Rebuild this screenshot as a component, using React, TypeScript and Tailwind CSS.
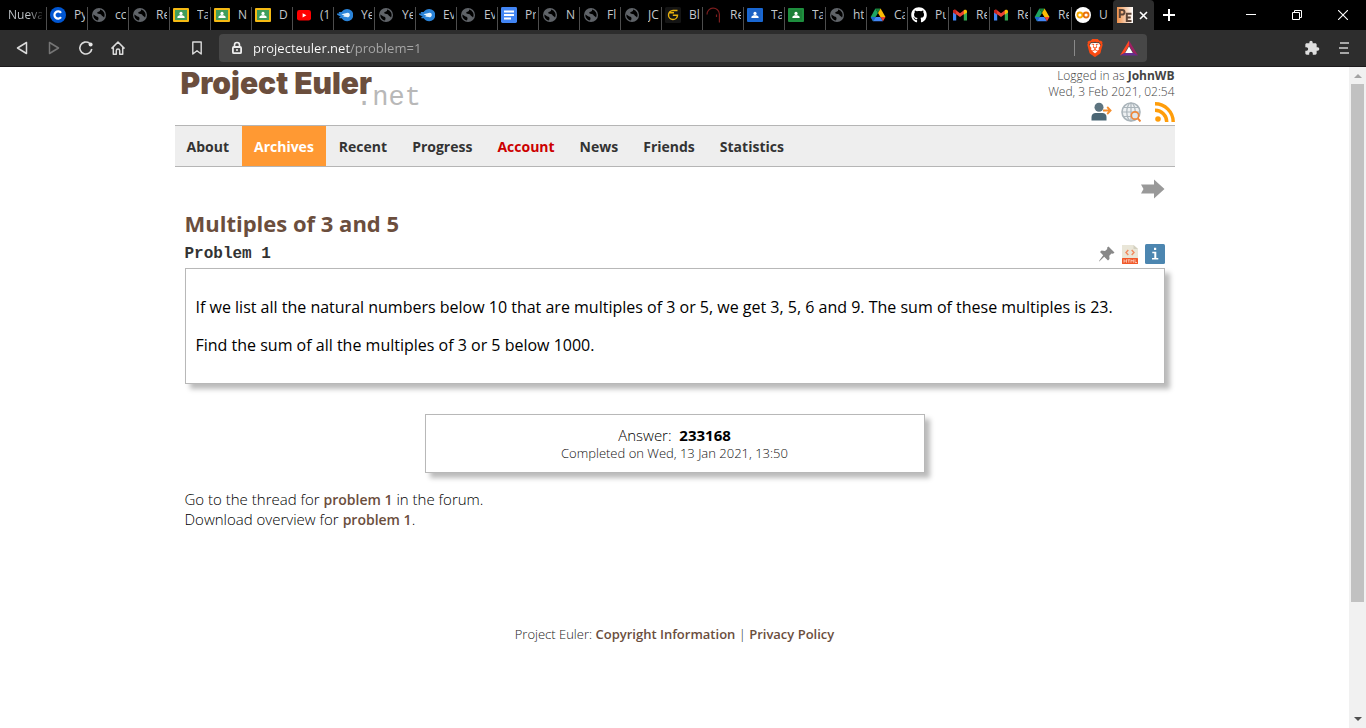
import type { ReactNode } from "react";
import { FaGithub } from "react-icons/fa";
import { MdExtension } from "react-icons/md";
import { SiBrave } from "react-icons/si";

const iconBox = "h-4 w-4 shrink-0";

function Coursera() {
  return (
    <svg viewBox="0 0 16 16" className={iconBox} aria-hidden="true">
      <circle cx="8" cy="8" r="8" fill="#0056d2" />
      <path d="M11 5.9A3.6 3.6 0 1 0 11 10.1" fill="none" stroke="#fff" strokeWidth="2.2" />
    </svg>
  );
}

function Globe() {
  return (
    <svg viewBox="0 0 16 16" className={iconBox} aria-hidden="true">
      <circle cx="8" cy="8" r="7" fill="#5f6368" />
      <path d="M2.300 7.600 5.500 9.500c1.500.3 2.200 1 2 2.200L7 13.600A5.700 5.700 0 0 1 2.300 7.600z" fill="#000" />
      <path d="M9 2.500v1.200c-.3 1-2.600.8-2.800 2C6.200 7 8.300 6.800 9.600 7.300c1.200.5.900 1.900 2.500 2.100l.9 1.200A5.700 5.700 0 0 0 9 2.500z" fill="#000" />
    </svg>
  );
}

function Board({ frame, fill }: { frame: string; fill: string }) {
  return (
    <svg viewBox="0 0 16 16" className={iconBox} aria-hidden="true">
      <rect x="0" y="1" width="16" height="14" rx="1" fill={frame} />
      <rect x="2" y="3" width="12" height="10" fill={fill} />
      <circle cx="8" cy="6.4" r="1.6" fill="#fff" />
      <path d="M4.4 11V10c0-1.2 2-1.8 3.6-1.8s3.6.6 3.6 1.8v1z" fill="#fff" />
    </svg>
  );
}

function Youtube() {
  return (
    <svg viewBox="0 0 16 16" className={iconBox} aria-hidden="true">
      <rect x="1" y="3" width="14" height="10.6" rx="2.4" fill="#f00" />
      <path d="M6.6 6.2 10.4 8.3 6.6 10.4z" fill="#fff" />
    </svg>
  );
}

function Comet() {
  return (
    <svg viewBox="0 0 16 16" className={iconBox} aria-hidden="true">
      <path d="M0 6.600h2.400L1.600 5h3C6 3 8 2 10.200 2a6 6 0 0 1 0 12.200C7.800 14.200 6 13 4.800 11.200H2.400V10H4L0 7.600z" fill="#2a83d8" />
      <path d="M4.500 7.200 9.600 5.900a2.300 2.300 0 1 1 0 4.200L6 9.400 7.400 8.800z" fill="#e4f2fc" />
    </svg>
  );
}

function Docs() {
  return (
    <svg viewBox="0 0 16 16" className={iconBox} aria-hidden="true">
      <rect width="16" height="16" rx="1.4" fill="#4285f4" />
      <path d="M3 4.500h10M3 8h10M3 11.500h7" stroke="#fff" strokeWidth="1.800" />
    </svg>
  );
}

function GoldG() {
  return (
    <svg viewBox="0 0 16 16" className={iconBox} aria-hidden="true">
      <rect width="16" height="16" rx="1.5" fill="#141414" />
      <path d="M12.500 3.500H8a4.500 4.500 0 1 0 4.500 4.700H7.800M4 5.700h5" fill="none" stroke="#e8b10c" strokeWidth="1.400" />
    </svg>
  );
}

function Arch() {
  return (
    <svg viewBox="0 0 16 16" className={iconBox} aria-hidden="true">
      <path d="M1 7.500a6.200 6.200 0 0 1 12.400-.5v8.500M10.500 10V7.500" fill="none" stroke="#7a1d1d" strokeWidth="1.200" />
    </svg>
  );
}

function Drive() {
  return (
    <svg viewBox="0 0 16 16" className={iconBox} aria-hidden="true">
      <path d="M5.400 1.500 8 6 3 14.300.700 10z" fill="#1ea362" />
      <path d="M5.400 1.500h5.200L8 6z" fill="#188038" />
      <path d="M10.600 1.500 15.500 10h-5.100L8 6z" fill="#fbbc04" />
      <path d="M.700 10h5L3 14.300z" fill="#1967d2" />
      <path d="M5.700 10h4.700L13 14.300H3z" fill="#4285f4" />
      <path d="M10.400 10h5.100L13 14.300z" fill="#ea4335" />
    </svg>
  );
}

function Github() {
  return <FaGithub className="h-4 w-4 shrink-0 text-white" aria-hidden="true" />;
}

function Gmail() {
  return (
    <svg viewBox="0 0 16 16" className={iconBox} aria-hidden="true">
      <path d="M1 4.500v9h3.200V6.800z" fill="#4285f4" />
      <path d="M15 4.500v9h-3.200V6.800z" fill="#34a853" />
      <path d="M1 4.600C1 2.800 2.800 2.200 4 3.200l4 3.100 4-3.100V7L8 10.100 1 5z" fill="#ea4335" />
      <path d="M1 4.300v1.200L4.200 7.800V3.300C2.600 2.300 1 3 1 4.300z" fill="#c5221f" />
      <path d="M15 4.300v1.200l-3.200 2.300V3.300C13.400 2.300 15 3 15 4.300z" fill="#fbbc04" />
    </svg>
  );
}

function Colab() {
  return (
    <svg viewBox="0 0 16 16" className={iconBox} aria-hidden="true">
      <circle cx="8" cy="8" r="8" fill="#fff" />
      <circle cx="4.900" cy="8" r="2.500" fill="none" stroke="#f9ab00" strokeWidth="1.800" />
      <circle cx="11.100" cy="8" r="2.500" fill="none" stroke="#e8710a" strokeWidth="1.800" />
    </svg>
  );
}

const tabs: { icon: ReactNode; title: string }[] = [
  { icon: <Coursera />, title: "Py" },
  { icon: <Globe />, title: "cc" },
  { icon: <Globe />, title: "Re" },
  { icon: <Board frame="#f5ba14" fill="#3f9d5c" />, title: "Ta" },
  { icon: <Board frame="#f5ba14" fill="#3f9d5c" />, title: "N" },
  { icon: <Board frame="#f5ba14" fill="#3f9d5c" />, title: "D" },
  { icon: <Youtube />, title: "(1" },
  { icon: <Comet />, title: "Ye" },
  { icon: <Globe />, title: "Ye" },
  { icon: <Comet />, title: "Ev" },
  { icon: <Globe />, title: "Ev" },
  { icon: <Docs />, title: "Pr" },
  { icon: <Globe />, title: "N" },
  { icon: <Globe />, title: "Fl" },
  { icon: <Globe />, title: "JC" },
  { icon: <GoldG />, title: "Bl" },
  { icon: <Arch />, title: "Re" },
  { icon: <Board frame="#1967d2" fill="#1d62c4" />, title: "Ta" },
  { icon: <Board frame="#1e8e3e" fill="#1b7f37" />, title: "Ta" },
  { icon: <Globe />, title: "ht" },
  { icon: <Drive />, title: "Ca" },
  { icon: <Github />, title: "Pu" },
  { icon: <Gmail />, title: "Re" },
  { icon: <Gmail />, title: "Re" },
  { icon: <Drive />, title: "Re" },
  { icon: <Colab />, title: "U" },
];

function TabStrip() {
  return (
    <div className="flex h-[30px] items-stretch bg-black text-xs text-[#c3c8cc]">
      <button className="w-[46px] shrink-0 overflow-hidden pl-2 text-left">
        <span className="block w-[34px] overflow-hidden bg-linear-to-r from-[#c3c8cc] from-60% to-[#333] bg-clip-text text-transparent">
          Nueva
        </span>
      </button>
      {tabs.map((tab, i) => (
        <button key={i} className="flex w-[41px] shrink-0 items-stretch pt-[7px]">
          <span className="w-px bg-[#4d4d4d]" />
          <span className="flex h-4 items-center gap-2 pl-[3px]">
            {tab.icon}
            <span className="w-[11px] overflow-hidden whitespace-nowrap text-left">{tab.title}</span>
          </span>
        </button>
      ))}
      <div className="flex w-[42px] shrink-0 items-center gap-1.5 rounded-t border-l border-black bg-[#2d2d2d] pl-1">
        <svg viewBox="0 0 16 16" className={iconBox} aria-hidden="true">
          <defs>
            <linearGradient id="pe" x1="0" x2="1">
              <stop offset="0" stopColor="#f0914a" />
              <stop offset="1" stopColor="#fff" />
            </linearGradient>
          </defs>
          <rect width="16" height="16" fill="url(#pe)" />
          <path d="M2.800 11V3h2.400a2.300 2.300 0 0 1 0 4.600H2.800M14.500 6.800H9.800v7.200h4.700M9.800 10.400h4" fill="none" stroke="#5d4538" strokeWidth="2" />
        </svg>
        <button aria-label="Close tab">
          <svg viewBox="0 0 9 9" className="h-[9px] w-[9px]" aria-hidden="true">
            <path d="M1 1l7 7M8 1 1 8" stroke="#fff" strokeWidth="1.600" />
          </svg>
        </button>
      </div>
      <button aria-label="New tab" className="pl-[9px]">
        <svg viewBox="0 0 12 12" className="h-3 w-3" aria-hidden="true">
          <path d="M6 0v12M0 6h12" stroke="#fff" strokeWidth="2" />
        </svg>
      </button>
      <div className="ml-auto flex items-center gap-9 pr-[18px]">
        <button aria-label="Minimize">
          <svg viewBox="0 0 10 10" className="h-2.5 w-2.5" aria-hidden="true">
            <path d="M0 4.500h10" stroke="#fff" />
          </svg>
        </button>
        <button aria-label="Restore">
          <svg viewBox="0 0 10 10" className="h-2.5 w-2.5" aria-hidden="true">
            <path d="M.500 2.500h7v7h-7zM2.500 2.500v-2h7v7h-2" fill="none" stroke="#fff" />
          </svg>
        </button>
        <button aria-label="Close">
          <svg viewBox="0 0 10 10" className="h-2.5 w-2.5" aria-hidden="true">
            <path d="M0 0l10 10M10 0 0 10" stroke="#fff" strokeWidth="1.100" />
          </svg>
        </button>
      </div>
    </div>
  );
}

function Toolbar() {
  return (
    <div className="flex h-[37px] items-center border-b border-[#1c1a1c] bg-[#2d2d2d] pr-4 pl-[14px]">
      <div className="flex items-center gap-4">
        <button aria-label="Back">
          <svg viewBox="0 0 16 16" className="h-4 w-4" aria-hidden="true">
            <path d="M12.500 2.500v11L3.500 8z" fill="none" stroke="#dadada" strokeWidth="1.500" strokeLinejoin="round" />
          </svg>
        </button>
        <button aria-label="Forward">
          <svg viewBox="0 0 16 16" className="h-4 w-4" aria-hidden="true">
            <path d="M3.500 2.500v11L12.500 8z" fill="none" stroke="#757575" strokeWidth="1.500" strokeLinejoin="round" />
          </svg>
        </button>
        <button aria-label="Reload">
          <svg viewBox="0 0 16 16" className="h-4 w-4" aria-hidden="true">
            <path d="M11.500 3.200A6 6 0 1 0 13.800 9" fill="none" stroke="#dadada" strokeWidth="1.600" />
            <circle cx="12.600" cy="4.400" r="2" fill="#e8e8e8" />
          </svg>
        </button>
        <button aria-label="Home">
          <svg viewBox="0 0 16 16" className="h-4 w-4" aria-hidden="true">
            <path d="M1.500 8.600 8 2l6.500 6.600M3.300 7.500v6.800h3v-3.600a1.700 1.700 0 0 1 3.400 0v3.600h3V7.500" fill="none" stroke="#dadada" strokeWidth="1.500" strokeLinejoin="round" />
          </svg>
        </button>
      </div>
      <button aria-label="Bookmark this page" className="ml-[63px]">
        <svg viewBox="0 0 16 16" className="h-4 w-4" aria-hidden="true">
          <path d="M3.800 2h8.400v12L8 10.800 3.800 14z" fill="none" stroke="#dadada" strokeWidth="1.400" strokeLinejoin="round" />
        </svg>
      </button>
      <div className="ml-[14px] flex h-7 flex-1 items-center rounded bg-[#474747] pr-[9px] pl-3">
        <svg viewBox="0 0 12 14" className="h-[14px] w-3 shrink-0" aria-hidden="true">
          <path d="M3.500 6V4a2.500 2.500 0 0 1 5 0v2" fill="none" stroke="#eee" strokeWidth="1.600" />
          <rect x="1.900" y="6" width="8.200" height="6.200" rx="1" fill="none" stroke="#eee" strokeWidth="1.800" />
          <circle cx="6" cy="9" r="1" fill="#eee" />
        </svg>
        <input
          aria-label="Address"
          defaultValue="projecteuler.net/problem=1"
          className="ml-2.5 h-5 min-w-0 flex-1 bg-linear-to-r from-white from-[97px] to-[#a8a8a8] to-[97px] bg-clip-text text-[13px] text-transparent outline-none"
        />
        <span className="h-4 w-px bg-[#8a8a8a]" />
        <button aria-label="Brave Shields" className="ml-[11px] grid">
          <svg viewBox="0 0 18 18" className="col-start-1 row-start-1 h-[18px] w-[18px]" aria-hidden="true">
            <path d="M5 4h8l1.500 3-2 6L9 16l-3.500-3-2-6z" fill="#fff" />
          </svg>
          <SiBrave className="col-start-1 row-start-1 h-[18px] w-[18px] text-[#fb4a12]" aria-hidden="true" />
        </button>
        <button aria-label="Brave Rewards" className="ml-4">
          <svg viewBox="0 0 18 18" className="h-[18px] w-[18px]" aria-hidden="true">
            <path d="M9 1.500 0 16.500l4.600-2.600L9 6.400z" fill="#ff4724" />
            <path d="M9 1.500 18 16.500l-4.600-2.600L9 6.400z" fill="#9e1f63" />
            <path d="M0 16.500h18l-4.600-2.600H4.600z" fill="#662d91" />
            <path d="M9 7.400l3.800 6.500H5.200z" fill="#fff" />
          </svg>
        </button>
      </div>
      <button aria-label="Extensions" className="ml-[157px] text-[#dedede]">
        <MdExtension className="h-4 w-4" aria-hidden="true" />
      </button>
      <button aria-label="Menu" className="ml-[19px]">
        <svg viewBox="0 0 11 12" className="h-3 w-[11px]" aria-hidden="true">
          <path d="M1 1h9M0 6h9M1 11h9" stroke="#cfcfcf" strokeWidth="1.600" />
        </svg>
      </button>
    </div>
  );
}

function UserLinks() {
  return (
    <div className="flex flex-col items-end pt-px text-xs leading-4 font-[340] text-[#444]">
      <p>
        Logged in as <strong className="font-bold">JohnWB</strong>
      </p>
      <p>Wed, 3 Feb 2021, 02:54</p>
      <div className="mt-0.5 flex items-center">
        <a href="#sign-out" aria-label="Sign out">
          <svg viewBox="0 0 21 20" className="h-5 w-[21px]" aria-hidden="true">
            <circle cx="8" cy="5.200" r="4.500" fill="#5d7480" />
            <path d="M.500 18.500V15c0-2.600 2-4 4-4h7c2 0 4 1.400 4 4v3.500z" fill="#4b6674" />
            <path d="M12 8.500h7M16.200 5l3.400 3.500L16.200 12" fill="none" stroke="#f58f2e" strokeWidth="1.800" />
          </svg>
        </a>
        <a href="#search" aria-label="Search" className="ml-[9px]">
          <svg viewBox="0 0 20 20" className="h-5 w-5" aria-hidden="true">
            <circle cx="10" cy="10" r="9" fill="#edf0f2" stroke="#aab4ba" strokeWidth="1.600" />
            <ellipse cx="10" cy="10" rx="4.200" ry="9" fill="none" stroke="#aab4ba" strokeWidth="1.200" />
            <path d="M10 1v18M1 10h18M2.500 5.500h15M2.500 14.500h15" fill="none" stroke="#aab4ba" strokeWidth="1.200" />
            <circle cx="14" cy="13.500" r="3.700" fill="#dfe7ec" stroke="#f0883a" strokeWidth="1.700" />
            <path d="M16.600 16.200 19.500 19.500" stroke="#f0883a" strokeWidth="2" />
          </svg>
        </a>
        <a href="#feed" aria-label="RSS feed" className="ml-[14px]">
          <svg viewBox="0 0 20 20" className="h-5 w-5" aria-hidden="true">
            <circle cx="3" cy="17" r="2.800" fill="#ff9d0a" />
            <path d="M0 8.300A11.500 11.500 0 0 1 11.700 20M0 1.800A18.200 18.200 0 0 1 18.200 20" fill="none" stroke="#ff9d0a" strokeWidth="3.500" />
          </svg>
        </a>
      </div>
    </div>
  );
}

const navItems = ["About", "Archives", "Recent", "Progress", "Account", "News", "Friends", "Statistics"];

function navClass(item: string) {
  if (item === "Archives") return "flex items-center bg-[#ff9933] px-3 text-white";
  if (item === "Account") return "flex items-center px-3 text-[#cc0000]";
  return "flex items-center px-3 text-[#333]";
}

function Nav() {
  return (
    <nav className="flex h-[42px] gap-px border-y border-[#b5b5b5] bg-[#eee] text-[14px] font-bold">
      {navItems.map((item) => (
        <a key={item} href={"#" + item.toLowerCase()} className={navClass(item)}>
          {item}
        </a>
      ))}
    </nav>
  );
}

function Problem() {
  return (
    <main className="px-2.5">
      <div className="flex justify-end pt-3">
        <a href="#next" aria-label="Next problem">
          <svg viewBox="0 0 25 20" className="h-5 w-[25px]" aria-hidden="true">
            <path d="M1 5.500h13V.500L24.500 10 14 19.500v-5H1L3.500 10z" fill="#999" />
          </svg>
        </a>
      </div>
      <h1 className="mt-[9px] text-[22px] leading-[30px] font-bold text-[#6b4e3d]">Multiples of 3 and 5</h1>
      <div className="flex items-center justify-between pt-1">
        <h2 className="font-['Liberation_Mono',monospace] text-base leading-6 font-bold text-[#333]">Problem 1</h2>
        <div className="flex items-center">
          <svg viewBox="0 0 18 18" className="h-[18px] w-[18px]" aria-hidden="true">
            <path d="M10.500 1.500l6 6-1.500 1.200-1.500-.200-2.200 2.300.200 3.200-1.500 1.500-3.800-3.800L1 16.800l.500-1.600 3.700-5L2 7l1.500-1.500 3.500.400L9.300 4 9 2.800z" fill="#888" />
          </svg>
          <svg viewBox="0 0 16 20" className="ml-1.5 h-5 w-4" aria-hidden="true">
            <path d="M0 1h11.500L16 5v10H0z" fill="#e9e6d8" />
            <path d="M11.500 1v4H16z" fill="#d3d0c0" />
            <path d="M6.300 6 4 8.500 6.300 11M9.700 6 12 8.500 9.700 11" fill="none" stroke="#f28a5e" strokeWidth="1.400" />
            <rect y="14" width="16" height="6" rx=".6" fill="#f1592a" />
            <path d="M2 15.300v3.400M4.500 15.300v3.400M2 17h2.500M5.500 15.800h2.500M6.800 15.800v2.900M9 18.700v-3l1.200 1.500 1.200-1.500v3M13 15.300v3.200h2" fill="none" stroke="#fbd3c4" strokeWidth=".8" />
          </svg>
          <svg viewBox="0 0 20 20" className="ml-[7px] h-5 w-5" aria-hidden="true">
            <rect width="20" height="20" rx="1.500" fill="#4c86b0" />
            <path d="M9 3.800h2.200V6H9zM7.300 7.800h4v6.200h2v1.400H7v-1.400h2.300V9.200h-2z" fill="#fff" />
          </svg>
        </div>
      </div>
      <section className="mt-0.5 border border-[#b8b8b8] bg-white px-2.5 py-[26px] text-[16px] leading-6 font-[370] text-black shadow-[5px_5px_5px_#bbb]">
        <p>
          If we list all the natural numbers below 10 that are multiples of 3 or 5, we get 3, 5, 6 and 9. The sum of these
          multiples is 23.
        </p>
        <p className="mt-[14px]">Find the sum of all the multiples of 3 or 5 below 1000.</p>
      </section>
      <section className="mx-auto mt-[30px] max-w-[500px] border border-[#b8b8b8] bg-white px-4 py-2.5 text-center shadow-[5px_5px_5px_#bbb]">
        <p className="text-[15px] leading-5 font-[340] text-black">
          Answer: &nbsp;<strong className="font-bold">233168</strong>
        </p>
        <p className="text-[13px] leading-[17px] font-light text-[#111]">Completed on Wed, 13 Jan 2021, 13:50</p>
      </section>
      <p className="mt-4 text-[15px] leading-5 font-[330] text-black">
        Go to the thread for{" "}
        <a href="#thread" className="text-[14px] leading-4 font-semibold text-[#6b4e3d]">
          problem 1
        </a>{" "}
        in the forum.
        <br />
        Download overview for{" "}
        <a href="#overview" className="text-[14px] leading-4 font-semibold text-[#6b4e3d]">
          problem 1
        </a>
        .
      </p>
    </main>
  );
}

function Scrollbar() {
  return (
    <div className="flex w-[17px] shrink-0 flex-col items-center bg-[#f1f1f1]" aria-hidden="true">
      <svg viewBox="0 0 17 17" className="h-[17px] w-[17px]">
        <path d="M5 11h8L9 7z" fill="#a3a3a3" />
      </svg>
      <div className="w-[13px] grow-[518] bg-[#c1c1c1]" />
      <div className="grow-[109]" />
      <svg viewBox="0 0 17 17" className="h-[17px] w-[17px]">
        <path d="M5 6h8L9 10z" fill="#505050" />
      </svg>
    </div>
  );
}

export default function App() {
  return (
    <div className="flex min-h-screen flex-col bg-white font-['Open_Sans','Noto_Sans',sans-serif]">
      <TabStrip />
      <Toolbar />
      <div className="flex flex-1">
        <div className="min-w-0 flex-1">
          <div className="mx-auto max-w-[1000px]">
            <header className="flex min-h-[58px] items-start justify-between">
              <a href="#home" className="flex items-start pl-1.5">
                <span className="font-[Inter,sans-serif] text-[30px] leading-8 font-black text-[#6b4e3d]">Project Euler</span>
                <span className="-ml-4 pt-[15px] font-['Liberation_Mono',monospace] text-[27px] leading-8 text-[#b8b8b8]">.net</span>
              </a>
              <UserLinks />
            </header>
            <Nav />
            <Problem />
            <footer className="mt-[95px] text-center text-[13px] leading-5 font-[330] text-[#222]">
              Project Euler:{" "}
              <a href="#copyright" className="font-semibold text-[#6b4e3d]">
                Copyright Information
              </a>{" "}
              |{" "}
              <a href="#privacy" className="font-semibold text-[#6b4e3d]">
                Privacy Policy
              </a>
            </footer>
          </div>
        </div>
        <Scrollbar />
      </div>
    </div>
  );
}
